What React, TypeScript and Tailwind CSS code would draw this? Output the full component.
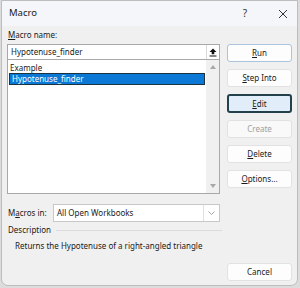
import React from "react";

const font = { fontFamily: '"Noto Sans", "Open Sans", sans-serif' };

function Btn({ children, cls = "" }: { children: React.ReactNode; cls?: string }) {
  return (
    <div className={`h-[18px] w-[65px] flex items-center justify-center text-[8px] rounded-[3px] ${cls}`}>
      {children}
    </div>
  );
}

export default function App() {
  return (
    <div className="w-[300px] h-[288px] bg-[#dcdcdc] relative overflow-hidden" style={font}>
      <div className="absolute left-[1px] top-0 w-[297px] h-[286px] bg-[#f0f0f0] border border-[#bdbdbd] rounded-b-[7px] flex flex-col text-[#1a1a1a]">
        {/* Title bar */}
        <div className="h-[25px] bg-[#f4f6f9] flex items-center pl-[7px] pr-[7px] shrink-0">
          <span className="text-[9.5px]">Macro</span>
          <span className="ml-auto mr-[31px] text-[10px] text-[#333]">?</span>
          <svg width="10" height="10" viewBox="0 0 10 10" className="mr-[2px]">
            <path d="M1 1 L9 9 M9 1 L1 9" stroke="#333" strokeWidth="1" />
          </svg>
        </div>
        {/* Body */}
        <div className="flex-1 flex flex-col px-[5px]">
          <div className="flex">
            {/* Left column */}
            <div className="w-[215px] flex flex-col">
              <div className="h-[18px] flex items-center text-[8px] pl-[1px]">
                <span><span className="underline">M</span>acro name:</span>
              </div>
              <div className="h-[16px] bg-white border border-[#a8a8a8] flex items-center pl-[3px]">
                <span className="text-[8px]">Hypotenuse_finder</span>
                <div className="ml-auto w-[13px] h-full border-l border-[#d8d8d8] flex items-center justify-center">
                  <svg width="8" height="9" viewBox="0 0 8 9">
                    <path d="M4 0.5 L7.5 4 L5.3 4 L5.3 6.3 L2.7 6.3 L2.7 4 L0.5 4 Z" fill="#111" />
                    <rect x="0.5" y="7.5" width="7" height="1" fill="#111" />
                  </svg>
                </div>
              </div>
              <div className="h-[134px] bg-white border border-[#a8a8a8] border-t-0 flex">
                <div className="flex-1 flex flex-col pt-[2px]">
                  <div className="h-[11px] flex items-center pl-[2px] text-[8px]">Example</div>
                  <div className="h-[12px] mx-[1px] bg-[#0a78d4] border border-[#1c3340] flex items-center pl-[2px] text-white text-[8px]">
                    Hypotenuse_finder
                  </div>
                </div>
                <div className="w-[13px] bg-[#f0f0f0] flex flex-col items-center justify-between py-[5px]">
                  <svg width="6" height="4" viewBox="0 0 6 4"><path d="M0 4 L3 0 L6 4 Z" fill="#a8a8a8" /></svg>
                  <svg width="6" height="4" viewBox="0 0 6 4"><path d="M0 0 L3 4 L6 0 Z" fill="#a8a8a8" /></svg>
                </div>
              </div>
              <div className="h-[10px]" />
              <div className="flex items-center h-[18px]">
                <span className="w-[46px] text-[8px] pl-[1px]">M<span className="underline">a</span>cros in:</span>
                <div className="flex-1 h-[18px] bg-white border border-[#c8c8c8] flex items-center pl-[3px]">
                  <span className="text-[8px]">All Open Workbooks</span>
                  <div className="ml-auto w-[16px] h-full border-l border-[#e0e0e0] flex items-center justify-center">
                    <svg width="7" height="4" viewBox="0 0 7 4"><path d="M0.5 0.5 L3.5 3.5 L6.5 0.5" stroke="#9a9a9a" fill="none" strokeWidth="0.9" /></svg>
                  </div>
                </div>
              </div>
            </div>
            {/* Right column */}
            <div className="ml-[7px] flex flex-col gap-[7px] pt-[18px]">
              <Btn cls="bg-[#fdfdfd] border border-[#a9c4dc]"><span><span className="underline">R</span>un</span></Btn>
              <Btn cls="bg-[#fdfdfd] border border-[#e2e2e2]"><span><span className="underline">S</span>tep Into</span></Btn>
              <Btn cls="h-[19px] bg-[#e1eef9] border-2 border-[#22414b]"><span><span className="underline">E</span>dit</span></Btn>
              <Btn cls="bg-[#f9f9f9] border border-[#e2e2e2] text-[#a0a0a0]">Create</Btn>
              <Btn cls="bg-[#fdfdfd] border border-[#e2e2e2]"><span><span className="underline">D</span>elete</span></Btn>
              <Btn cls="bg-[#fdfdfd] border border-[#e2e2e2]"><span><span className="underline">O</span>ptions...</span></Btn>
            </div>
          </div>
          {/* Description */}
          <div className="w-[215px] h-[16px] flex items-center pl-[1px]">
            <span className="text-[8px]">Description</span>
            <div className="flex-1 ml-[5px] h-px bg-[#dcdcdc]" />
          </div>
          <div className="h-[16px] flex items-center pl-[8px] text-[8px]">
            Returns the Hypotenuse of a right-angled triangle
          </div>
          <div className="flex justify-end mt-[9px]">
            <Btn cls="bg-[#fdfdfd] border border-[#e2e2e2]">Cancel</Btn>
          </div>
        </div>
      </div>
    </div>
  );
}
